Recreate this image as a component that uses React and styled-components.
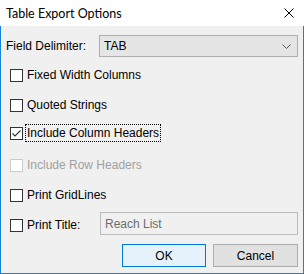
import React from 'react'
import styled, { createGlobalStyle } from 'styled-components'

const Global = createGlobalStyle`
  body {
    margin: 0;
    background: #ffffff;
    font-family: "Liberation Sans", Arial, sans-serif;
  }
`

const Window = styled.div`
  width: 304px;
  height: 274px;
  display: flex;
  flex-direction: column;
  box-sizing: border-box;
`

const TitleBar = styled.div`
  height: 26px;
  flex: none;
  display: flex;
  align-items: center;
  justify-content: space-between;
  padding: 0 10px 0 6px;
  background: #ffffff;
  font-family: "Lato", "Open Sans", sans-serif;
  font-size: 12.5px;
  color: #000000;
`

const Body = styled.div`
  flex: 1;
  display: flex;
  flex-direction: column;
  background: #f0f0f0;
  border: 1px solid #1883d7;
  border-top: none;
  padding: 9px 5px 0 5px;
  font-size: 12px;
  color: #000000;
`

const DelimiterRow = styled.div`
  display: flex;
  align-items: center;
  justify-content: space-between;
  height: 22px;
  margin-bottom: 3px;
`

const Select = styled.div`
  width: 199px;
  height: 22px;
  box-sizing: border-box;
  border: 1px solid #adadad;
  background: #e5e5e5;
  display: flex;
  align-items: center;
  justify-content: space-between;
  padding: 0 6px 0 4px;
`

const Row = styled.div`
  height: 30px;
  box-sizing: border-box;
  display: flex;
  align-items: center;
  padding-left: 4px;
  padding-bottom: ${(p) => p.pb || 0}px;
  color: ${(p) => (p.disabled ? '#a0a0a0' : '#000000')};
`

const Box = styled.span`
  width: 13px;
  height: 13px;
  box-sizing: border-box;
  border: 1px solid ${(p) => (p.disabled ? '#cccccc' : '#333333')};
  background: #ffffff;
  flex: none;
  display: flex;
  align-items: center;
  justify-content: center;
  margin-right: 3px;
`

const Label = styled.span`
  padding: 1px 1px;
  border: 1px dotted ${(p) => (p.focused ? '#000000' : 'transparent')};
  margin-left: -1px;
`

const TitleInput = styled.div`
  margin-left: auto;
  width: 198px;
  height: 23px;
  box-sizing: border-box;
  border: 1px solid #bcbcbc;
  background: #f0f0f0;
  color: #6d6d6d;
  display: flex;
  align-items: center;
  padding-left: 4px;
  margin-top: -3px;
`

const Buttons = styled.div`
  display: flex;
  justify-content: flex-end;
  gap: 7px;
  margin-top: 4px;
`

const Button = styled.div`
  width: ${(p) => p.w}px;
  height: 23px;
  box-sizing: border-box;
  display: flex;
  align-items: center;
  justify-content: center;
  border: 1px solid ${(p) => (p.primary ? '#0078d7' : '#adadad')};
  background: ${(p) => (p.primary ? '#e5f1fb' : '#e1e1e1')};
`

const Check = () => (
  <svg width="11" height="11" viewBox="0 0 11 11">
    <polyline points="1.5,5.5 4,8 9.5,2.5" fill="none" stroke="#333" strokeWidth="1.1" />
  </svg>
)

const Chevron = () => (
  <svg width="9" height="5" viewBox="0 0 9 5">
    <polyline points="0.5,0.5 4.5,4.5 8.5,0.5" fill="none" stroke="#555" strokeWidth="1" />
  </svg>
)

const CloseIcon = () => (
  <svg width="10" height="10" viewBox="0 0 10 10">
    <path d="M0.5 0.5 L9.5 9.5 M9.5 0.5 L0.5 9.5" stroke="#000" strokeWidth="1" />
  </svg>
)

const Option = ({ label, checked, disabled, focused, pb }) => (
  <Row disabled={disabled} pb={pb}>
    <Box disabled={disabled}>{checked && <Check />}</Box>
    <Label focused={focused}>{label}</Label>
  </Row>
)

export default function App() {
  return (
    <Window>
      <Global />
      <TitleBar>
        <span>Table Export Options</span>
        <CloseIcon />
      </TitleBar>
      <Body>
        <DelimiterRow>
          <span>Field Delimiter:</span>
          <Select>
            <span>TAB</span>
            <Chevron />
          </Select>
        </DelimiterRow>
        <Option label="Fixed Width Columns" />
        <Option label="Quoted Strings" />
        <Option label="Include Column Headers" checked focused pb={4} />
        <Option label="Include Row Headers" disabled />
        <Option label="Print GridLines" />
        <Row>
          <Box />
          <Label>Print Title:</Label>
          <TitleInput>Reach List</TitleInput>
        </Row>
        <Buttons>
          <Button primary w={84}>OK</Button>
          <Button w={85}>Cancel</Button>
        </Buttons>
      </Body>
    </Window>
  )
}
